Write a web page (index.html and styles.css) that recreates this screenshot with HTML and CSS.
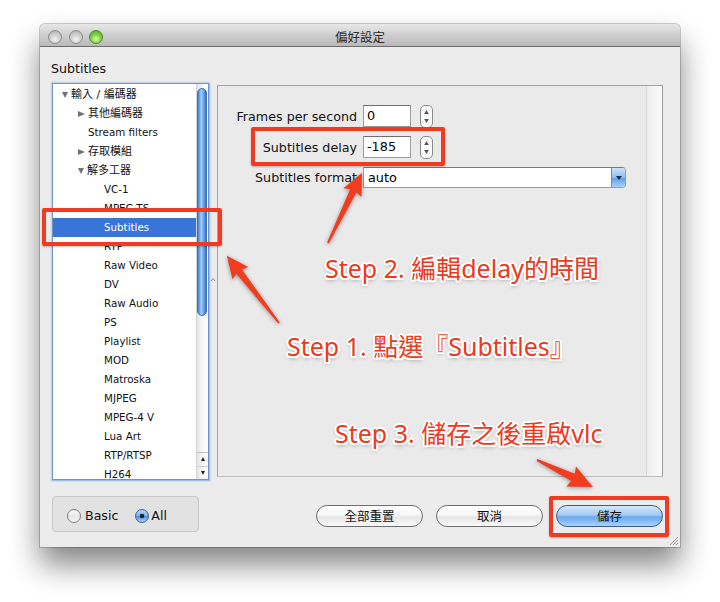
FILE: index.html
```html
<!DOCTYPE html>
<html lang="zh-Hant">
<head>
<meta charset="utf-8">
<title>偏好設定</title>
<link rel="stylesheet" href="styles.css">
</head>
<body>
<div class="page">
  <div class="window">
    <div class="titlebar">
      <div class="lights">
        <span class="light grey"></span>
        <span class="light grey"></span>
        <span class="light green"></span>
      </div>
      <div class="title">偏好設定</div>
      <div></div>
    </div>
    <div class="content">
      <div class="heading">Subtitles</div>
      <div class="main">
        <div class="tree">
          <ul class="rows">
            <li class="row l0 cjk"><span class="tri down"></span>輸入 / 編碼器</li>
            <li class="row l1 cjk"><span class="tri right"></span>其他編碼器</li>
            <li class="row l1n">Stream filters</li>
            <li class="row l1 cjk"><span class="tri right"></span>存取模組</li>
            <li class="row l1 cjk"><span class="tri down"></span>解多工器</li>
            <li class="row l2">VC-1</li>
            <li class="row l2">MPEG-TS</li>
            <li class="row l2 selected">Subtitles</li>
            <li class="row l2">RTP</li>
            <li class="row l2">Raw Video</li>
            <li class="row l2">DV</li>
            <li class="row l2">Raw Audio</li>
            <li class="row l2">PS</li>
            <li class="row l2">Playlist</li>
            <li class="row l2">MOD</li>
            <li class="row l2">Matroska</li>
            <li class="row l2">MJPEG</li>
            <li class="row l2">MPEG-4 V</li>
            <li class="row l2">Lua Art</li>
            <li class="row l2">RTP/RTSP</li>
            <li class="row l2">H264</li>
          </ul>
          <div class="vscroll">
            <div class="track"><div class="thumb"></div></div>
            <div class="arrows">
              <span class="arr up"></span>
              <span class="arr dn"></span>
            </div>
          </div>
        </div>
        <div class="divider">
          <svg width="8" height="8" viewBox="0 0 8 8"><path d="M2 5 L4 2.5 L6 5" fill="none" stroke="#8a8a8a" stroke-width="1"/></svg>
        </div>
        <div class="panel">
          <div class="form">
            <div class="field">
              <span class="lbl">Frames per second</span>
              <span class="input">0</span>
              <svg class="stepper" width="13" height="23" viewBox="0 0 13 23"><rect x="0.5" y="0.5" width="12" height="22" rx="4.5" fill="#fafafa" stroke="#8a8a8a"/><path d="M6.5 5 L8.8 9 L4.2 9 Z" fill="#555"/><path d="M6.5 18 L8.8 14 L4.2 14 Z" fill="#555"/></svg>
            </div>
            <div class="field">
              <span class="lbl">Subtitles delay</span>
              <span class="input">-185</span>
              <svg class="stepper" width="13" height="23" viewBox="0 0 13 23"><rect x="0.5" y="0.5" width="12" height="22" rx="4.5" fill="#fafafa" stroke="#8a8a8a"/><path d="M6.5 5 L8.8 9 L4.2 9 Z" fill="#555"/><path d="M6.5 18 L8.8 14 L4.2 14 Z" fill="#555"/></svg>
            </div>
            <div class="field short">
              <span class="lbl">Subtitles format</span>
              <span class="combo"><span class="combo-text">auto</span><span class="combo-btn"><span class="caret"></span></span></span>
            </div>
          </div>
          <div class="panel-edge"></div>
        </div>
      </div>
      <div class="footer">
        <div class="mode">
          <span class="radio"></span><span class="rlabel">Basic</span>
          <span class="radio on"></span><span class="rlabel">All</span>
        </div>
        <div class="buttons">
          <span class="btn">全部重置</span>
          <span class="btn">取消</span>
          <span class="btn primary">儲存</span>
        </div>
      </div>
    </div>
    <svg class="grip" width="11" height="11" viewBox="0 0 11 11"><path d="M10 2 L2 10 M10 5 L5 10 M10 8 L8 10" stroke="#9a9a9a" stroke-width="1"/></svg>
  </div>

  <div class="annot">
    <div class="box box-sub"></div>
    <div class="box box-delay"></div>
    <div class="box box-save"></div>
    <svg class="arrows-layer" width="720" height="602" viewBox="0 0 720 602">
      <polygon transform="translate(279,323) rotate(-127.8)" points="0,-1 65,-3.5 63,-10 85,0 63,10 65,3.5 0,1"/>
      <polygon transform="translate(328,243) rotate(-64.1)" points="0,-1 58,-3.5 56,-10 78,0 56,10 58,3.5 0,1"/>
      <polygon transform="translate(537,460) rotate(25.7)" points="0,-1 40,-4 38,-11 62,0 38,11 40,4 0,1"/>
    </svg>
    <div class="step step2">Step 2. 編輯delay的時間</div>
    <div class="step step1">Step 1. 點選『Subtitles』</div>
    <div class="step step3">Step 3. 儲存之後重啟vlc</div>
  </div>
</div>
</body>
</html>
```

FILE: styles.css
```css
* { box-sizing: border-box; }
html, body { margin: 0; padding: 0; }
body {
  background: #fff;
  font-family: "DejaVu Sans", "Noto Sans CJK TC", sans-serif;
  color: #000;
}
.page {
  position: relative;
  width: 720px;
  height: 602px;
  overflow: hidden;
  background: #fff;
}
.window {
  position: relative;
  margin: 24px 0 0 40px;
  width: 640px;
  height: 523px;
  background: #ececec;
  border-radius: 5px 5px 0 0;
  box-shadow: 0 18px 30px rgba(0,0,0,.48), 0 0 0 1px rgba(0,0,0,.2);
  display: flex;
  flex-direction: column;
}
.titlebar {
  height: 23px;
  flex: none;
  padding-top: 3px;
  border-bottom: 1px solid #6c6c6c;
  border-radius: 5px 5px 0 0;
  background: linear-gradient(#e8e8e8, #cfcfcf 50%, #b9b9b9);
  display: grid;
  grid-template-columns: 1fr auto 1fr;
  align-items: center;
}
.lights {
  display: flex;
  gap: 6.5px;
  padding-left: 8px;
}
.light {
  width: 14px;
  height: 14px;
  border-radius: 50%;
}
.light.grey {
  background: radial-gradient(circle at 50% 70%, #f2f2f2 0, #d2d2d2 45%, #a9a9a9 100%);
  border: 1px solid #8e8e8e;
}
.light.green {
  background: radial-gradient(circle at 50% 68%, #d9ffb0 0, #8ed84e 40%, #46a01c 100%);
  border: 1px solid #4a8a2c;
}
.title {
  font-family: "Noto Sans CJK TC", sans-serif;
  font-size: 12.5px;
  color: #2a2a2a;
  line-height: 16px;
}
.content {
  flex: 1;
  padding: 0 17px 0 12px;
  display: flex;
  flex-direction: column;
}
.heading {
  height: 36px;
  padding-top: 14px;
  line-height: 16px;
  font-size: 12.6px;
  margin-left: -1px;
  color: #111;
}
.main {
  display: flex;
  height: 397px;
  flex: none;
}
.tree {
  width: 157px;
  height: 397px;
  flex: none;
  border: 1px solid #6f95cc;
  box-shadow: 0 0 1.5px 1.5px rgba(110,160,225,.6);
  background: #fff;
  display: flex;
  overflow: hidden;
}
.rows {
  flex: 1;
  list-style: none;
  margin: 0;
  padding: 1px 0 0 0;
  overflow: hidden;
}
.row {
  height: 19px;
  line-height: 19px;
  font-size: 10.3px;
  white-space: nowrap;
  display: flex;
  align-items: center;
  color: #111;
}
.row.cjk { font-size: 11px; }
.l0 { padding-left: 9px; }
.l1 { padding-left: 25px; }
.l1n { padding-left: 35px; }
.l2 { padding-left: 51px; }
.row.selected {
  background: #3875d7;
  color: #fff;
}
.tri {
  width: 0;
  height: 0;
  margin-right: 3px;
  flex: none;
}
.tri.down {
  border-left: 3.5px solid transparent;
  border-right: 3.5px solid transparent;
  border-top: 6px solid #727272;
}
.tri.right {
  border-top: 3.5px solid transparent;
  border-bottom: 3.5px solid transparent;
  border-left: 7px solid #727272;
}
.vscroll {
  width: 12px;
  flex: none;
  display: flex;
  flex-direction: column;
  border-left: 1px solid #d4d4d4;
  background: linear-gradient(to right, #e4e4e4, #f7f7f7 50%, #fdfdfd);
}
.track { flex: 1; }
.thumb {
  margin: 4px 1px 0 0;
  height: 228px;
  border-radius: 5px;
  border: 1px solid #3c6fb6;
  background: linear-gradient(to right, #3f7fd6, #a7cdf6 40%, #6aa5ea 70%, #3273cc);
}
.arrows {
  height: 27px;
  display: flex;
  flex-direction: column;
  border-top: 1px solid #bdbdbd;
}
.arr {
  flex: 1;
  display: flex;
  align-items: center;
  justify-content: center;
}
.arr.up::before {
  content: "";
  border-left: 2.5px solid transparent;
  border-right: 2.5px solid transparent;
  border-bottom: 4px solid #222;
}
.arr.dn { border-top: 1px solid #cfcfcf; }
.arr.dn::before {
  content: "";
  border-left: 2.5px solid transparent;
  border-right: 2.5px solid transparent;
  border-top: 4px solid #222;
}
.divider {
  width: 8px;
  flex: none;
  padding-top: 193px;
}
.divider svg { display: block; }
.panel {
  width: 446px;
  height: 392px;
  flex: none;
  margin-top: 2px;
  border: 1px solid #a3a3a3;
  border-bottom-color: #bdbdbd;
  border-right-color: #9c9c9c;
  background: #eaeaea;
  display: flex;
}
.form {
  flex: 1;
  padding-top: 19px;
  display: flex;
  flex-direction: column;
  gap: 9px;
}
.field {
  display: flex;
  align-items: center;
  height: 22px;
}
.field.short { height: 21px; }
.lbl {
  width: 145px;
  flex: none;
  text-align: right;
  padding-right: 6px;
  font-size: 12.7px;
  white-space: nowrap;
  color: #111;
}
.input {
  width: 48px;
  height: 22px;
  flex: none;
  border: 1px solid #9b9b9b;
  border-top-color: #6e6e6e;
  background: #fff;
  font-size: 12.8px;
  line-height: 20px;
  padding-left: 3px;
}
.stepper {
  display: block;
  margin-left: 9px;
  flex: none;
}
.combo {
  width: 263px;
  height: 21px;
  flex: none;
  display: flex;
  border: 1px solid #9b9b9b;
  border-top-color: #7a7a7a;
  border-radius: 0 4px 4px 0;
  background: #fff;
}
.combo-text {
  flex: 1;
  font-size: 12.8px;
  line-height: 19px;
  padding-left: 4px;
}
.combo-btn {
  width: 14px;
  flex: none;
  border-left: 1px solid #6b8fc3;
  border-radius: 0 3px 3px 0;
  background: linear-gradient(#cde3fa, #8cbdf1 50%, #5c9ee8 52%, #a6d0fb);
  display: flex;
  align-items: center;
  justify-content: center;
}
.caret {
  border-left: 3px solid transparent;
  border-right: 3px solid transparent;
  border-top: 4px solid #1e2a40;
}
.panel-edge {
  width: 16px;
  flex: none;
  border-left: 1px solid #d6d6d6;
  background: linear-gradient(to right, #eeeeee, #fafafa);
}
.footer {
  margin-top: 16px;
  height: 36px;
  display: flex;
  align-items: center;
}
.mode {
  width: 147px;
  height: 36px;
  border: 1px solid #c8c8c8;
  border-radius: 4px;
  background: #e2e2e2;
  display: flex;
  align-items: center;
  padding: 3px 0 0 14px;
}
.radio {
  width: 14px;
  height: 14px;
  border-radius: 50%;
  flex: none;
  border: 1px solid #7d7d7d;
  background: linear-gradient(#fdfdfd, #e6e6e6 50%, #f8f8f8);
}
.radio.on {
  margin-left: 17px;
  border-color: #3e5f90;
  background: radial-gradient(circle, #1b2230 0 2px, transparent 2.6px), linear-gradient(#b8d8f8, #78b0ee 50%, #4b90e4 52%, #a9d3fb);
}
.rlabel {
  font-size: 12.6px;
  margin-left: 4px;
  color: #111;
}
.radio.on + .rlabel { margin-left: 2px; }
.buttons {
  margin-left: auto;
  margin-top: 3px;
  display: flex;
  gap: 13px;
}
.btn {
  width: 107px;
  height: 22px;
  border-radius: 11px;
  border: 1px solid #6e6e6e;
  background: linear-gradient(#ffffff, #f6f6f6 45%, #e6e6e6 55%, #fbfbfb);
  font-family: "Noto Sans CJK TC", sans-serif;
  font-size: 12.5px;
  line-height: 20px;
  text-align: center;
  color: #111;
}
.btn.primary {
  border-color: #3c5c8e;
  background: linear-gradient(#d3e7fb, #a3cbf4 45%, #6aa8ee 55%, #a8d4fd);
}
.grip {
  position: absolute;
  right: 1px;
  bottom: 1px;
}

/* annotations overlay */
.annot {
  position: absolute;
  left: 0;
  top: 0;
  width: 720px;
  height: 602px;
  pointer-events: none;
}
.box {
  position: absolute;
  border: 4px solid #f13a1f;
  border-radius: 2px;
  box-shadow: 0 1px 2px rgba(0,0,0,.25);
}
.box-sub { left: 42px; top: 208px; width: 180px; height: 38px; }
.box-delay { left: 251px; top: 127px; width: 194px; height: 39px; }
.box-save { left: 549px; top: 496px; width: 120px; height: 41px; }
.arrows-layer {
  position: absolute;
  left: 0;
  top: 0;
  fill: #f23c1e;
  filter: drop-shadow(0 1px 2px rgba(0,0,0,.4));
}
.step {
  position: absolute;
  font-family: "Noto Sans", "Noto Sans CJK TC", sans-serif;
  font-size: 25px;
  line-height: 30px;
  color: #ec3a21;
  white-space: nowrap;
  text-shadow:
    -2px 0 0 #fff, 2px 0 0 #fff, 0 -2px 0 #fff, 0 2px 0 #fff,
    -1.5px -1.5px 0 #fff, 1.5px -1.5px 0 #fff, -1.5px 1.5px 0 #fff, 1.5px 1.5px 0 #fff,
    0 2px 4px rgba(0,0,0,.45);
}
.step2 { left: 325px; top: 253px; }
.step1 { left: 287px; top: 331px; }
.step3 { left: 335px; top: 418px; }
```
